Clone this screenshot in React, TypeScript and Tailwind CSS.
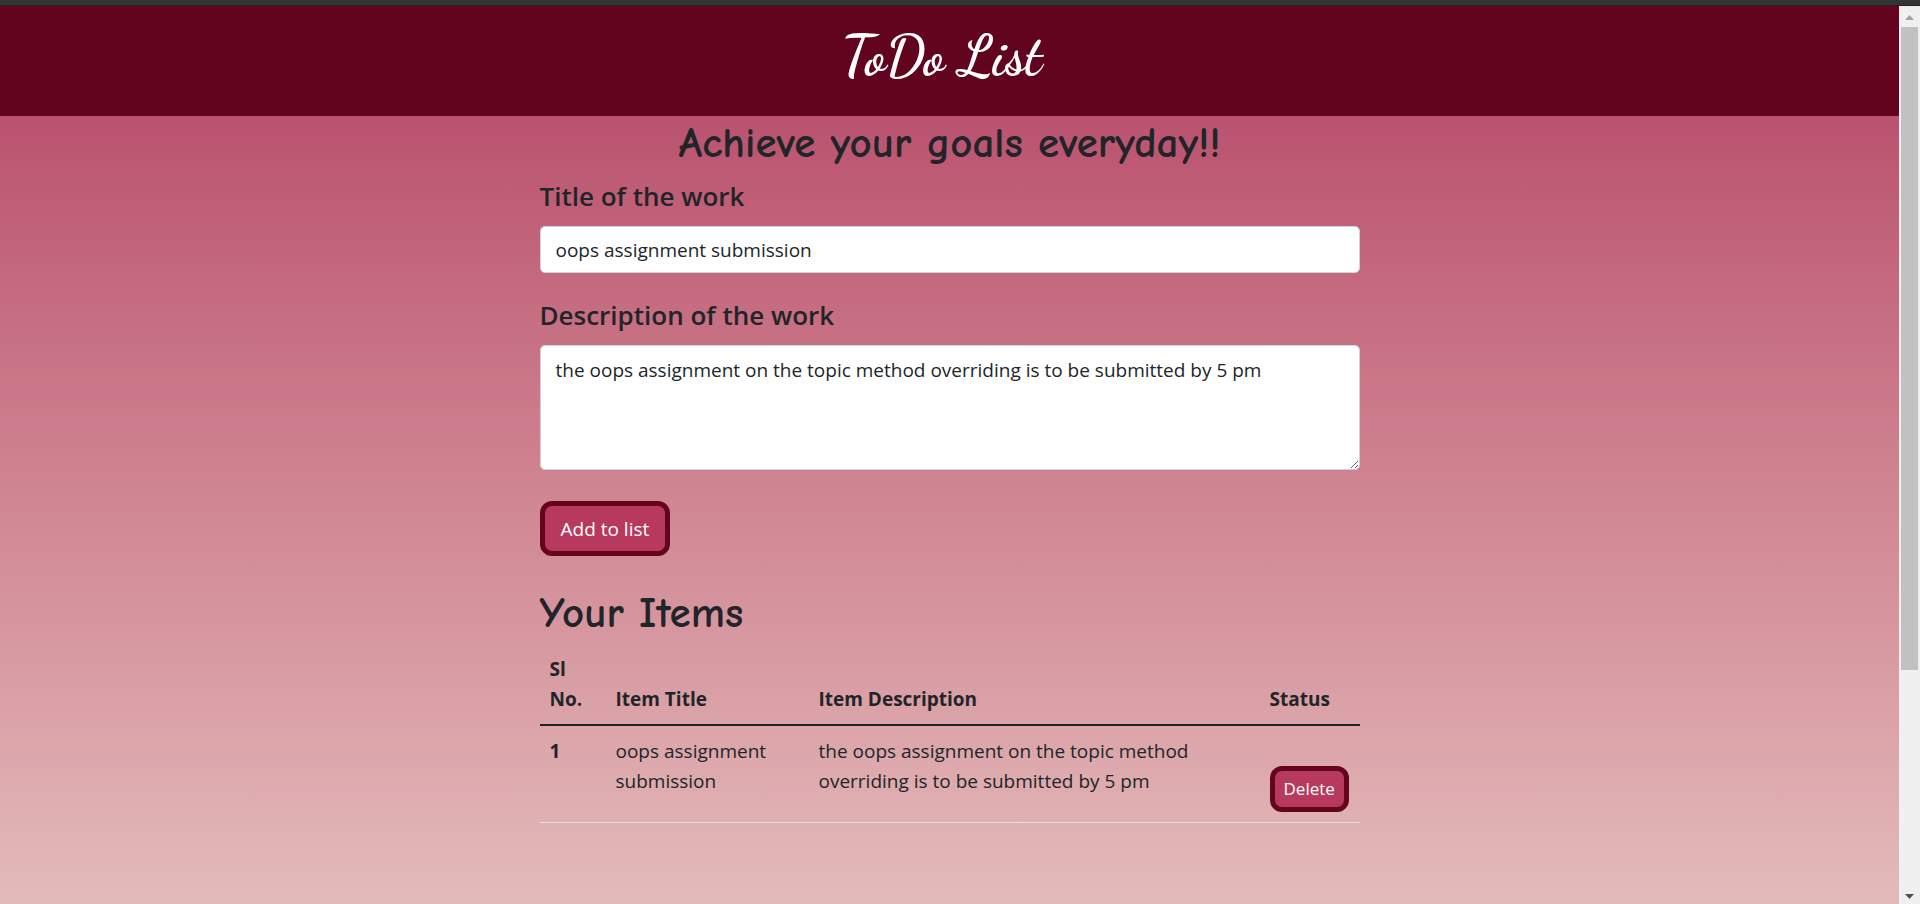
import { useState } from "react";

const body = "font-['Segoe_UI','Open_Sans','Noto_Sans',sans-serif]";
const comic =
  "font-['Comic_Sans_MS','Comic_Neue','Open_Sans',cursive] text-[43px] leading-[54px] font-bold";
const label = "block text-[26px] leading-[36px] font-semibold";
const action =
  "border-[5px] border-[#64041f] bg-[#b73a5e] text-white rounded-xl cursor-pointer";

type Item = { title: string; description: string };

function ScrollRail() {
  return (
    <div className="flex w-[21px] shrink-0 flex-col bg-[#f0f0f0] px-[2px]" aria-hidden="true">
      <svg className="h-[21px] w-[17px] shrink-0" viewBox="0 0 17 21">
        <path d="M4 14 L8.5 9 L13 14 Z" fill="#a3a3a3" />
      </svg>
      <div className="grow-[643] basis-0 bg-[#c1c1c1]" />
      <div className="grow-[213] basis-0" />
      <svg className="h-[21px] w-[17px] shrink-0" viewBox="0 0 17 21">
        <path d="M4 11 L8.5 16 L13 11 Z" fill="#505050" />
      </svg>
    </div>
  );
}

export default function App() {
  const [title, setTitle] = useState("oops assignment submission");
  const [description, setDescription] = useState(
    "the oops assignment on the topic method overriding is to be submitted by 5 pm",
  );
  const [items, setItems] = useState<Item[]>([{ title, description }]);

  return (
    <div className={`flex min-h-screen flex-col text-[#212529] ${body}`}>
      <div className="h-[6px] border-b border-[#222] bg-[#343434]" />
      <div className="flex grow">
        <div className="flex grow flex-col bg-linear-to-b from-[#ba526f] from-12% to-[#e3bbbb]">
          <header className="flex h-[110px] justify-center bg-[#62041e] pt-4 pr-4">
            <h1 className="font-['Dancing_Script','Liberation_Serif',cursive] text-[56px] leading-[68px] font-bold text-white">
              ToDo List
            </h1>
          </header>
          <main className="mx-auto w-full max-w-[820px]">
            <h2 className={`text-center ${comic}`}>Achieve your goals everyday!!</h2>
            <form
              onSubmit={(e) => {
                e.preventDefault();
                setItems([...items, { title, description }]);
              }}
            >
              <label htmlFor="title" className={`mt-2 ${label}`}>
                Title of the work
              </label>
              <input
                id="title"
                value={title}
                onChange={(e) => setTitle(e.target.value)}
                className="mt-3 block h-[47px] w-full rounded-[5px] border border-[#ced4da] bg-white px-[15px] text-[19px] leading-[30px]"
              />
              <label htmlFor="description" className={`mt-6 ${label}`}>
                Description of the work
              </label>
              <textarea
                id="description"
                value={description}
                onChange={(e) => setDescription(e.target.value)}
                className="mt-3 block h-[125px] w-full rounded-[5px] border border-[#ced4da] bg-white px-[15px] py-[9px] text-[19px] leading-[30px]"
              />
              <button type="submit" className={`mt-[31px] block h-[55px] px-4 text-[19px] leading-[30px] ${action}`}>
                Add to list
              </button>
            </form>
            <h2 className={`mt-[30px] ${comic}`}>Your Items</h2>
            <table className="mt-1 w-full table-fixed border-collapse text-[19px] leading-[30px]">
              <colgroup>
                <col className="w-[66px]" />
                <col className="w-[203px]" />
                <col />
                <col className="w-[100px]" />
              </colgroup>
              <thead>
                <tr className="border-b-2 border-[#212529] text-left align-bottom">
                  <th className="p-[10px]">Sl No.</th>
                  <th className="p-[10px]">Item Title</th>
                  <th className="p-[10px]">Item Description</th>
                  <th className="p-[10px]">Status</th>
                </tr>
              </thead>
              <tbody>
                {items.map((item, i) => (
                  <tr key={i} className="border-b border-[#dee2e6] text-left align-top">
                    <th className="p-[10px]">{i + 1}</th>
                    <td className="p-[10px]">{item.title}</td>
                    <td className="p-[10px]">{item.description}</td>
                    <td className="p-[10px] pt-[40px]">
                      <button
                        type="button"
                        onClick={() => setItems(items.filter((_, n) => n !== i))}
                        className={`block h-[46px] px-[9px] text-[17px] leading-[26px] ${action}`}
                      >
                        Delete
                      </button>
                    </td>
                  </tr>
                ))}
              </tbody>
            </table>
          </main>
        </div>
        <ScrollRail />
      </div>
    </div>
  );
}
